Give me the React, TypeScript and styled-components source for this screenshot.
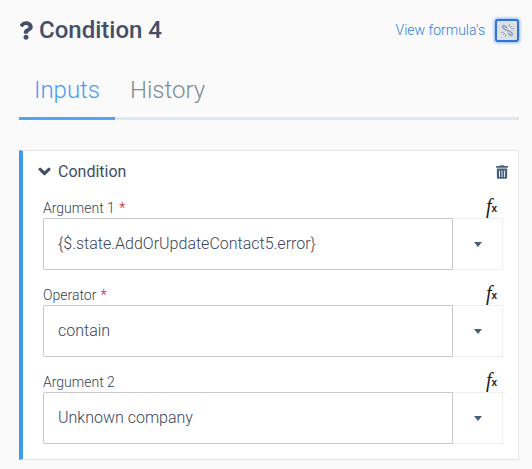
import { createGlobalStyle } from 'styled-components';
import styled from 'styled-components';
import { FaChevronDown, FaQuestion, FaTrashAlt } from 'react-icons/fa';

const GlobalStyle = createGlobalStyle`
  html, body {
    margin: 0;
    padding: 0;
    background: #fafafa;
    font-family: Roboto, "Liberation Sans", sans-serif;
    color: #3e4d66;
  }
`;

const Page = styled.div`
  width: 532px;
  height: 469px;
  box-sizing: border-box;
  padding: 15px 13px 0 19px;
  overflow: hidden;
`;

const Header = styled.header`
  display: flex;
  align-items: center;
  justify-content: space-between;
  height: 30px;
`;

const Title = styled.h1`
  display: flex;
  align-items: center;
  gap: 6px;
  margin: 0;
  font-size: 24px;
  line-height: 30px;
  font-weight: 500;
  color: #434f68;

  svg {
    width: 14px;
    height: 19px;
  }
`;

const FormulaLink = styled.div`
  display: flex;
  align-items: center;
  gap: 10px;
  font-size: 14px;
  font-weight: 300;
  color: #2f7fe0;
`;

const FormulaToggle = styled.button`
  display: flex;
  align-items: center;
  justify-content: center;
  width: 24px;
  height: 23px;
  padding: 0;
  box-sizing: border-box;
  background: #dedfe2;
  border: 2px solid #2f74d6;
  border-radius: 3px;
  box-shadow: 0 0 3px 1px rgba(70, 140, 240, 0.6);
`;

const UnlinkIcon = styled.svg`
  width: 15px;
  height: 15px;
  fill: none;
  stroke: #7f9cc0;
  stroke-width: 1.5;
  stroke-linecap: round;
`;

const Tabs = styled.nav`
  display: flex;
  margin-top: 29px;
  border-bottom: 3px solid #dde8ef;
`;

const Tab = styled.div<{ $active?: boolean }>`
  padding: 0 15px 11px 15px;
  margin-bottom: -3px;
  font-size: 24px;
  line-height: 32px;
  font-weight: 300;
  color: ${p => (p.$active ? '#4a9cf8' : '#7b8e98')};
  border-bottom: 3px solid ${p => (p.$active ? '#55a2f5' : 'transparent')};
`;

const Card = styled.section`
  margin-top: 30px;
  box-sizing: border-box;
  height: 310px;
  background: #fff;
  border: 1px solid #e6e6e6;
  border-left: 4px solid #3d9be9;
  padding: 0 15px 0 20px;
`;

const CardHeader = styled.div`
  display: flex;
  align-items: center;
  justify-content: space-between;
  height: 41px;
  font-size: 16px;
  font-weight: 400;
  color: #3e4d66;
`;

const CardTitle = styled.div`
  display: flex;
  align-items: center;
  gap: 7px;
  margin-left: -5px;

  svg {
    width: 13px;
    height: 13px;
    stroke: currentColor;
    stroke-width: 40;
  }
`;

const Trash = styled(FaTrashAlt)`
  width: 12px;
  height: 14px;
  color: #45607f;
  margin-right: -5px;
`;

const Field = styled.div`
  & + & {
    margin-top: 9px;
  }
`;

const LabelRow = styled.div`
  display: flex;
  align-items: flex-end;
  justify-content: space-between;
  height: 26px;
  padding-bottom: 1px;
  box-sizing: border-box;
`;

const Label = styled.label`
  font-size: 14px;
  line-height: 17px;
  font-weight: 300;
  color: #34425a;
`;

const Required = styled.span`
  margin-left: 1px;
  color: #d0021b;
`;

const Fx = styled.span`
  display: flex;
  align-items: flex-end;
  height: 17px;
  margin-right: 6px;
  margin-bottom: 2px;
  color: #1c1c1c;

  i {
    font-family: "Liberation Serif", serif;
    font-size: 20px;
    line-height: 17px;
  }

  b {
    font-family: "Liberation Sans", sans-serif;
    font-size: 10px;
    line-height: 13px;
  }
`;

const InputRow = styled.div`
  display: flex;
  height: 52px;
`;

const Input = styled.div`
  flex: 1;
  display: flex;
  align-items: center;
  box-sizing: border-box;
  padding: 0 0 2px 14px;
  background: #fff;
  border: 1px solid #c8c8c8;
  border-radius: 2px 0 0 2px;
  font-size: 16px;
  font-weight: 300;
  color: #3a465c;
`;

const SelectButton = styled.div`
  width: 50px;
  display: flex;
  align-items: center;
  justify-content: center;
  box-sizing: border-box;
  border: 1px solid #eeeeee;
  border-left: 0;
`;

const Caret = styled.span`
  width: 0;
  height: 0;
  border-left: 4.5px solid transparent;
  border-right: 4.5px solid transparent;
  border-top: 5px solid #45607f;
`;

const fields = [
  { label: 'Argument 1', required: true, value: '{$.state.AddOrUpdateContact5.error}' },
  { label: 'Operator', required: true, value: 'contain' },
  { label: 'Argument 2', required: false, value: 'Unknown company' },
];

export default function App() {
  return (
    <Page>
      <GlobalStyle />
      <Header>
        <Title>
          <FaQuestion />
          Condition 4
        </Title>
        <FormulaLink>
          View formula's
          <FormulaToggle type='button'>
            <UnlinkIcon viewBox='0 0 16 16'>
              <path d='M7 5 L5.2 3.2 C4 2 2 3.8 3.2 5 L5 6.8 C5.8 7.6 6.8 7.8 7.6 7.4' />
              <path d='M9 11 L10.8 12.8 C12 14 14 12.2 12.8 11 L11 9.2 C10.2 8.4 9.2 8.2 8.4 8.6' />
              <path d='M10 1.5 V3.5 M12.5 3.5 L11.2 4.8 M14.5 6 H12.5' strokeWidth='1' />
              <path d='M6 14.5 V12.5 M3.5 12.5 L4.8 11.2 M1.5 10 H3.5' strokeWidth='1' />
            </UnlinkIcon>
          </FormulaToggle>
        </FormulaLink>
      </Header>
      <Tabs>
        <Tab $active>Inputs</Tab>
        <Tab>History</Tab>
      </Tabs>
      <Card>
        <CardHeader>
          <CardTitle>
            <FaChevronDown />
            Condition
          </CardTitle>
          <Trash />
        </CardHeader>
        {fields.map(field => (
          <Field key={field.label}>
            <LabelRow>
              <Label>
                {field.label} {field.required && <Required>*</Required>}
              </Label>
              <Fx><i>f</i><b>x</b></Fx>
            </LabelRow>
            <InputRow>
              <Input>{field.value}</Input>
              <SelectButton>
                <Caret />
              </SelectButton>
            </InputRow>
          </Field>
        ))}
      </Card>
    </Page>
  );
}
